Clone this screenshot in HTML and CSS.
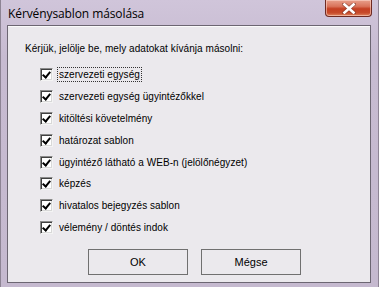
FILE: index.html
```html
<!DOCTYPE html>
<html lang="hu">
<head>
<meta charset="utf-8">
<title>Kérvénysablon másolása</title>
<link rel="stylesheet" href="styles.css">
</head>
<body>
<div class="window">
  <div class="titlebar">
    <span class="title">Kérvénysablon másolása</span>
    <button class="close" aria-label="Bezárás">
      <svg width="14" height="11" viewBox="0 0 14 11"><path d="M2 1 L12 10 M12 1 L2 10" stroke="#5a2a22" stroke-width="4" stroke-linecap="square" opacity="0.45"/><path d="M2.5 1.5 L11.5 9.5 M11.5 1.5 L2.5 9.5" stroke="#ffffff" stroke-width="2.6" stroke-linecap="square"/></svg>
    </button>
  </div>
  <div class="client">
    <p class="prompt">Kérjük, jelölje be, mely adatokat kívánja másolni:</p>
    <ul class="options">
      <li><span class="box"></span><span class="label focus">szervezeti egység</span></li>
      <li><span class="box"></span><span class="label">szervezeti egység ügyintézőkkel</span></li>
      <li><span class="box"></span><span class="label">kitöltési követelmény</span></li>
      <li><span class="box"></span><span class="label">határozat sablon</span></li>
      <li><span class="box"></span><span class="label">ügyintéző látható a WEB-n (jelölőnégyzet)</span></li>
      <li><span class="box"></span><span class="label">képzés</span></li>
      <li><span class="box"></span><span class="label">hivatalos bejegyzés sablon</span></li>
      <li><span class="box"></span><span class="label">vélemény / döntés indok</span></li>
    </ul>
    <div class="actions">
      <button class="btn">OK</button>
      <button class="btn">Mégse</button>
    </div>
  </div>
</div>
</body>
</html>
```

FILE: styles.css
```css
html, body {
  margin: 0;
  padding: 0;
}
body {
  width: 379px;
  height: 287px;
  overflow: hidden;
  background: #c8bdd2;
}
.window {
  width: 379px;
  height: 287px;
  box-sizing: border-box;
  background: linear-gradient(to bottom, #d0c5da 0%, #c7bbd1 20%, #c5b9cf 100%);
  display: flex;
  flex-direction: column;
  border-left: 1px solid #8d8494;
  border-right: 1px solid #8d8494;
}
.titlebar {
  height: 25px;
  display: flex;
  align-items: flex-start;
  padding-left: 7px;
  padding-right: 6px;
  box-sizing: border-box;
}
.title {
  font-family: "Open Sans", "Noto Sans", sans-serif;
  font-size: 12px;
  color: #000;
  line-height: 16px;
  margin-top: 6px;
  letter-spacing: -0.1px;
}
.close {
  margin-left: auto;
  width: 47px;
  height: 17px;
  padding: 0;
  border: 1px solid #6e2a22;
  border-top: none;
  border-radius: 0 0 4px 4px;
  background: linear-gradient(to bottom, #e8a08c 0%, #d9735a 40%, #c43f22 55%, #c74a2a 80%, #e0855f 100%);
  box-shadow: inset 0 0 0 1px rgba(255,220,210,0.55);
  display: flex;
  align-items: center;
  justify-content: center;
}
.client {
  margin: 0 7px 4px 6px;
  flex: 1;
  background: #ebe9ed;
  border: 1px solid #6c6672;
  box-shadow: inset 0 1px 0 #fbfbfb;
  font-family: "Liberation Sans", Arial, sans-serif;
  font-size: 10px;
  color: #000;
  display: flex;
  flex-direction: column;
  padding-left: 17px;
}
.prompt {
  margin: 16px 0 0 0;
  line-height: 14px;
  letter-spacing: 0.05px;
}
.options {
  list-style: none;
  margin: 12px 0 0 15px;
  padding: 0;
  display: flex;
  flex-direction: column;
  gap: 8.9px;
}
.options li {
  display: flex;
  align-items: center;
  height: 13px;
}
.box {
  width: 13px;
  height: 13px;
  box-sizing: border-box;
  background: #fff;
  border-top: 1px solid #8a8a8a;
  border-left: 1px solid #8a8a8a;
  border-bottom: 1px solid #f4f4f4;
  border-right: 1px solid #f4f4f4;
  box-shadow: inset 1px 1px 0 #404040, inset -1px -1px 0 #d8d8d8;
  position: relative;
  flex: none;
}
.box::after {
  content: "";
  position: absolute;
  left: 3px;
  top: 1px;
  width: 3px;
  height: 6px;
  border-right: 2px solid #000;
  border-bottom: 2px solid #000;
  transform: rotate(40deg);
}
.label {
  margin-left: 4px;
  padding: 0 1px;
  line-height: 13px;
  letter-spacing: 0.05px;
  border: 1px dotted transparent;
}
.label.focus {
  border-color: #333;
}
.actions {
  display: flex;
  gap: 13px;
  margin-top: 15px;
  padding-left: 63px;
}
.btn {
  width: 100px;
  height: 26px;
  box-sizing: border-box;
  border: 1px solid #707070;
  background: #ebe9ed;
  font-family: "Liberation Sans", Arial, sans-serif;
  font-size: 11px;
  color: #000;
  padding: 0;
}
```
